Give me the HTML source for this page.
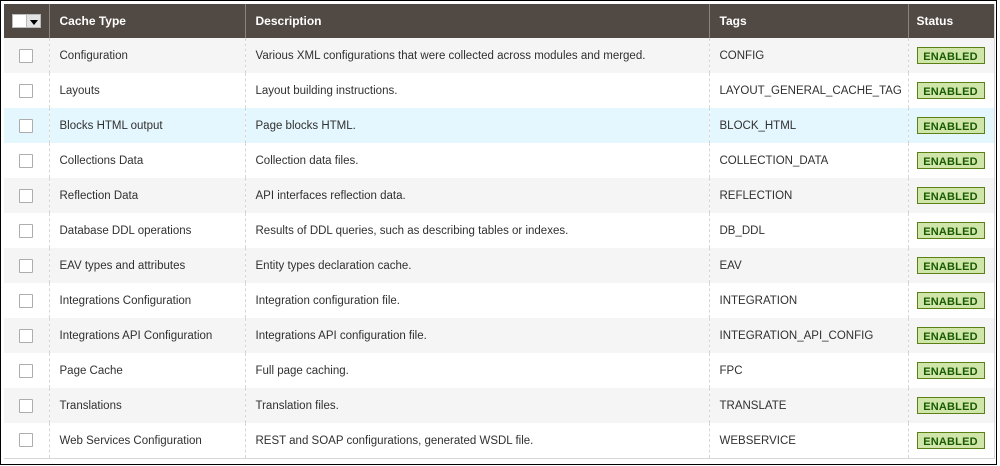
<!DOCTYPE html>
<html><head><meta charset="utf-8"><style>
*{margin:0;padding:0;box-sizing:border-box}
html,body{width:1000px;height:466px;background:#fff;overflow:hidden}
.frame{position:absolute;left:0;top:0;width:997px;height:465px;border:1px solid #000}
table{position:absolute;left:4px;top:4px;width:990px;border-collapse:collapse;font-family:"Liberation Sans",sans-serif;font-size:11.5px;color:#303030;table-layout:fixed;border-right:1px solid #d6d6d6;border-bottom:1px solid #d6d6d6}
th{background:#514943;color:#fff;font-weight:bold;font-size:12px;text-align:left;height:34px;padding:0 10px;border-left:1px solid #8a837f}
th:first-child{border-left:none}
td{height:35px;padding:1px 10px 0;border-left:1px dashed #d6d6d6;white-space:nowrap;overflow:hidden}
td:first-child{border-left:none;text-align:center;padding-top:0}
tr:nth-child(even) td{background:#f5f5f5}
tr.hl td{background:#e5f7fe}
.cb{display:inline-block;width:14px;height:14px;border:1px solid #adadad;background:#fff;vertical-align:middle;border-radius:1px}
.mass{display:inline-block;width:29px;height:14px;vertical-align:middle;position:relative}
.mass .w{position:absolute;left:0;top:0;width:15px;height:14px;background:#fff;border:1px solid #bbb}
.mass .d{position:absolute;left:15px;top:0;width:14px;height:14px;background:#e3e3e3;border:1px solid #bbb;border-left:none}
.mass .d:after{content:"";position:absolute;left:3px;top:5px;border-left:4px solid transparent;border-right:4px solid transparent;border-top:5px solid #000}
.en{display:inline-block;background:#d0e5a9;border:1px solid #5b8116;color:#185b00;font-weight:bold;font-size:11px;height:17px;line-height:16px;padding-top:1px;width:68px;text-align:center;letter-spacing:.2px;vertical-align:middle}
td.st{padding-left:8px;padding-top:0}
</style></head><body>
<div class="frame"></div>
<table>
<colgroup><col style="width:45px"><col style="width:196px"><col style="width:464px"><col style="width:199px"><col style="width:86px"></colgroup>
<tr><th style="text-align:center;padding:0"><span class="mass"><span class="w"></span><span class="d"></span></span></th><th>Cache Type</th><th>Description</th><th>Tags</th><th style="padding-left:8px">Status</th></tr>
<tr><td><span class="cb"></span></td><td>Configuration</td><td>Various XML configurations that were collected across modules and merged.</td><td>CONFIG</td><td class="st"><span class="en">ENABLED</span></td></tr>
<tr><td><span class="cb"></span></td><td>Layouts</td><td>Layout building instructions.</td><td>LAYOUT_GENERAL_CACHE_TAG</td><td class="st"><span class="en">ENABLED</span></td></tr>
<tr class="hl"><td><span class="cb"></span></td><td>Blocks HTML output</td><td>Page blocks HTML.</td><td>BLOCK_HTML</td><td class="st"><span class="en">ENABLED</span></td></tr>
<tr><td><span class="cb"></span></td><td>Collections Data</td><td>Collection data files.</td><td>COLLECTION_DATA</td><td class="st"><span class="en">ENABLED</span></td></tr>
<tr><td><span class="cb"></span></td><td>Reflection Data</td><td>API interfaces reflection data.</td><td>REFLECTION</td><td class="st"><span class="en">ENABLED</span></td></tr>
<tr><td><span class="cb"></span></td><td>Database DDL operations</td><td>Results of DDL queries, such as describing tables or indexes.</td><td>DB_DDL</td><td class="st"><span class="en">ENABLED</span></td></tr>
<tr><td><span class="cb"></span></td><td>EAV types and attributes</td><td>Entity types declaration cache.</td><td>EAV</td><td class="st"><span class="en">ENABLED</span></td></tr>
<tr><td><span class="cb"></span></td><td>Integrations Configuration</td><td>Integration configuration file.</td><td>INTEGRATION</td><td class="st"><span class="en">ENABLED</span></td></tr>
<tr><td><span class="cb"></span></td><td>Integrations API Configuration</td><td>Integrations API configuration file.</td><td>INTEGRATION_API_CONFIG</td><td class="st"><span class="en">ENABLED</span></td></tr>
<tr><td><span class="cb"></span></td><td>Page Cache</td><td>Full page caching.</td><td>FPC</td><td class="st"><span class="en">ENABLED</span></td></tr>
<tr><td><span class="cb"></span></td><td>Translations</td><td>Translation files.</td><td>TRANSLATE</td><td class="st"><span class="en">ENABLED</span></td></tr>
<tr><td><span class="cb"></span></td><td>Web Services Configuration</td><td>REST and SOAP configurations, generated WSDL file.</td><td>WEBSERVICE</td><td class="st"><span class="en">ENABLED</span></td></tr>
</table>
</body></html>
